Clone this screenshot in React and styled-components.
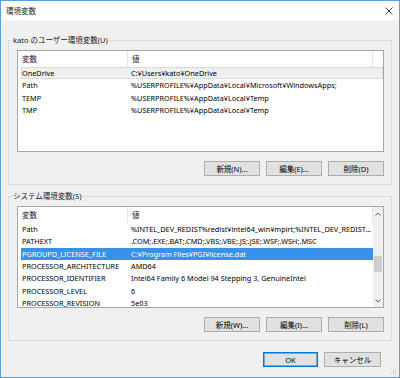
import styled, { createGlobalStyle } from "styled-components";

const GlobalStyle = createGlobalStyle`
  html, body {
    margin: 0;
    padding: 0;
    background: #ffffff;
  }
  body {
    font-family: "Noto Sans", "Noto Sans CJK JP", sans-serif;
    font-size: 7.3px;
    color: #000;
  }
  * {
    box-sizing: border-box;
  }
`

const Window = styled.div`
  position: relative;
  width: 400px;
  height: 378px;
  border: 1px solid #5b9fdf;
  background: #f0f0f0;
  display: flex;
  flex-direction: column;
`

const TitleBar = styled.div`
  height: 19px;
  background: #fff;
  display: flex;
  align-items: center;
  justify-content: space-between;
  padding: 0 6px 0 5px;
  font-family: "Noto Sans CJK JP", sans-serif;
  font-size: 7.5px;
  color: #222;
`

const CloseIcon = styled.svg`
  width: 8px;
  height: 8px;
  display: block;
`

const Body = styled.div`
  display: flex;
  flex-direction: column;
  padding: 0 7px;
`

const Group = styled.div`
  position: relative;
  margin-top: ${p => p.$top}px;
  border: 1px solid #dcdcdc;
  padding: 9px 7px 8px 8px;
`

const Legend = styled.span`
  position: absolute;
  top: -6px;
  left: 3px;
  padding: 0 1px;
  background: #f0f0f0;
  font-family: "Noto Sans", "Noto Sans CJK JP", sans-serif;
  font-size: 7.5px;
  line-height: 11px;
  color: #1a1a1a;
`

const List = styled.div`
  height: 102px;
  border: 1px solid #a6a6a6;
  background: #fff;
  display: flex;
  overflow: hidden;
`

const ListMain = styled.div`
  flex: 1;
  display: flex;
  flex-direction: column;
  overflow: hidden;
`

const Header = styled.div`
  display: grid;
  grid-template-columns: 110px 245px;
  height: 16px;
  flex-shrink: 0;
`

const HeaderCell = styled.div`
  padding-left: 4px;
  line-height: 16px;
  border-right: 1px solid #e5e5e5;
  font-family: "Noto Sans CJK JP", sans-serif;
  font-size: 7.5px;
  color: #1a1a1a;
`

const Row = styled.div`
  display: grid;
  grid-template-columns: 107px 244px;
  margin-left: 3px;
  height: 12.33px;
  line-height: 12.33px;
  flex-shrink: 0;
  white-space: nowrap;
  background: ${p => (p.$state === "active" ? "#3892ec" : p.$state === "inactive" ? "#efefef" : "transparent")};
  color: ${p => (p.$state === "active" ? "#fff" : "#000")};
  outline: ${p => (p.$state === "inactive" ? "1px dotted #c8c8c8" : "none")};
  outline-offset: -1px;
`

const Cell = styled.div`
  padding-left: ${p => (p.$value ? 3 : 1)}px;
  overflow: hidden;
`

const Scrollbar = styled.div`
  width: 10px;
  background: #f0f0f0;
  display: flex;
  flex-direction: column;
  align-items: center;
`

const ArrowBox = styled.div`
  height: 13px;
  width: 10px;
  display: flex;
  align-items: center;
  justify-content: center;
  flex-shrink: 0;
`

const Track = styled.div`
  flex: 1;
  width: 10px;
`

const Thumb = styled.div`
  margin: 36px 1px 0;
  height: 16px;
  background: #cdcdcd;
`

const ButtonRow = styled.div`
  display: flex;
  justify-content: flex-end;
  gap: 6px;
  margin-top: 9px;
  padding-right: ${p => p.$pr || 0}px;
`

const Button = styled.div`
  width: ${p => p.$w || 56}px;
  height: 15px;
  border: 1px solid ${p => (p.$default ? "#0078d7" : "#adadad")};
  box-shadow: ${p => (p.$default ? "inset 0 0 0 0.5px #0078d7" : "none")};
  background: #e1e1e1;
  display: flex;
  align-items: center;
  justify-content: center;
  font-family: "Noto Sans", "Noto Sans CJK JP", sans-serif;
  font-size: 7.5px;
  color: #000;
`

const Footer = styled(ButtonRow)`
  margin-top: 11px;
`

const Grip = styled.svg`
  position: absolute;
  right: 2px;
  bottom: 2px;
  width: 7px;
  height: 7px;
`

const Arrow = ({ up }) => (
  <svg width="6" height="4" viewBox="0 0 6 4">
    <path d={up ? "M0.5 3.5 L3 1 L5.5 3.5" : "M0.5 0.5 L3 3 L5.5 0.5"} fill="none" stroke="#606060" strokeWidth="1" />
  </svg>
)

const userVars = [
  ["OneDrive", "C:¥Users¥kato¥OneDrive", "inactive"],
  ["Path", "%USERPROFILE%¥AppData¥Local¥Microsoft¥WindowsApps;"],
  ["TEMP", "%USERPROFILE%¥AppData¥Local¥Temp"],
  ["TMP", "%USERPROFILE%¥AppData¥Local¥Temp"],
]

const systemVars = [
  ["Path", "%INTEL_DEV_REDIST%redist¥intel64_win¥mpirt;%INTEL_DEV_REDIST..."],
  ["PATHEXT", ".COM;.EXE;.BAT;.CMD;.VBS;.VBE;.JS;.JSE;.WSF;.WSH;.MSC"],
  ["PGROUPD_LICENSE_FILE", "C:¥Program Files¥PGI¥license.dat", "active"],
  ["PROCESSOR_ARCHITECTURE", "AMD64"],
  ["PROCESSOR_IDENTIFIER", "Intel64 Family 6 Model 94 Stepping 3, GenuineIntel"],
  ["PROCESSOR_LEVEL", "6"],
  ["PROCESSOR_REVISION", "5e03"],
]

const VarList = ({ rows, scroll }) => (
  <List>
    <ListMain>
      <Header>
        <HeaderCell>変数</HeaderCell>
        <HeaderCell>値</HeaderCell>
      </Header>
      {rows.map(([name, value, state]) => (
        <Row key={name} $state={state}>
          <Cell>{name}</Cell>
          <Cell $value>{value}</Cell>
        </Row>
      ))}
    </ListMain>
    {scroll && (
      <Scrollbar>
        <ArrowBox><Arrow up /></ArrowBox>
        <Track><Thumb /></Track>
        <ArrowBox><Arrow /></ArrowBox>
      </Scrollbar>
    )}
  </List>
)

export default function App() {
  return (
    <>
      <GlobalStyle />
      <Window>
        <TitleBar>
          <span>環境変数</span>
          <CloseIcon viewBox="0 0 8 8">
            <path d="M0.5 0.5 L7.5 7.5 M7.5 0.5 L0.5 7.5" stroke="#333" strokeWidth="0.9" />
          </CloseIcon>
        </TitleBar>
        <Body>
          <Group $top={20}>
            <Legend>kato のユーザー環境変数(U)</Legend>
            <VarList rows={userVars} />
            <ButtonRow>
              <Button>新規(N)...</Button>
              <Button>編集(E)...</Button>
              <Button>削除(D)</Button>
            </ButtonRow>
          </Group>
          <Group $top={11}>
            <Legend>システム環境変数(S)</Legend>
            <VarList rows={systemVars} scroll />
            <ButtonRow>
              <Button>新規(W)...</Button>
              <Button>編集(I)...</Button>
              <Button>削除(L)</Button>
            </ButtonRow>
          </Group>
          <Footer $pr={11}>
            <Button $w={55} $default>OK</Button>
            <Button $w={57}>キャンセル</Button>
          </Footer>
        </Body>
        <Grip viewBox="0 0 7 7">
          <rect x="5" y="1" width="1" height="1" fill="#bbb" />
          <rect x="3" y="3" width="1" height="1" fill="#bbb" />
          <rect x="5" y="3" width="1" height="1" fill="#bbb" />
          <rect x="1" y="5" width="1" height="1" fill="#bbb" />
          <rect x="3" y="5" width="1" height="1" fill="#bbb" />
          <rect x="5" y="5" width="1" height="1" fill="#bbb" />
        </Grip>
      </Window>
    </>
  )
}
